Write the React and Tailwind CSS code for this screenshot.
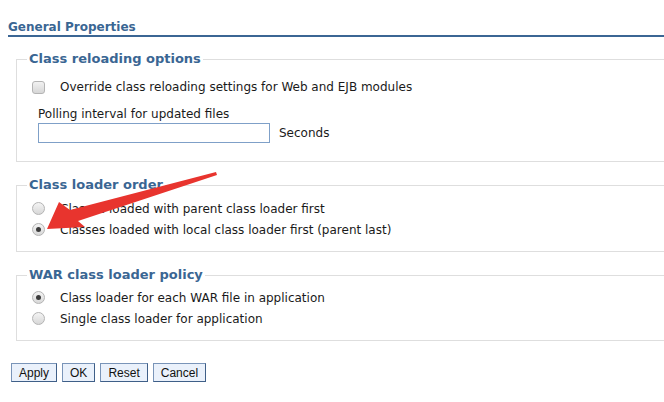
import React from "react";

function Radio({ checked }) {
  return (
    <span className="relative inline-flex items-center justify-center w-[13px] h-[13px] rounded-full border border-[#b4b4b4] bg-gradient-to-b from-[#f4f4f4] to-[#d8d8d8] shrink-0">
      {checked && <span className="w-[5px] h-[5px] rounded-full bg-[#3c3c3c]" />}
    </span>
  );
}

function Option({ checked, label }) {
  return (
    <div className="flex items-center h-[21px] pl-[5px]">
      <Radio checked={checked} />
      <span className="ml-[15px] text-[12px] text-[#1a1a1a]">{label}</span>
    </div>
  );
}

function Group({ title, className, children }) {
  return (
    <fieldset className={"border border-[#dedede] pl-[10px] mr-[-30px] " + className}>
      <legend className="px-[2px] text-[13px] font-bold text-[#3a6693] leading-[18px]">{title}</legend>
      {children}
    </fieldset>
  );
}

export default function App() {
  return (
    <div className="relative w-[664px] h-[402px] overflow-hidden bg-white font-['DejaVu_Sans',sans-serif]">
      <div className="pl-2 pt-[20px]">
        <h2 className="text-[12px] font-bold text-[#3a6693] leading-[15px] border-b-2 border-[#3b6694]">
          General Properties
        </h2>

        <div className="pl-2 pt-[13px]">
          <Group title="Class reloading options" className="pb-[18px]">
            <div className="flex items-center h-[18px] mt-[10px] pl-[5px]">
              <span className="w-[13px] h-[13px] rounded-[3px] border border-[#b4b4b4] bg-gradient-to-b from-[#f2f2f2] to-[#d6d6d6] shrink-0" />
              <span className="ml-[15px] text-[12px] text-[#1a1a1a]">
                Override class reloading settings for Web and EJB modules
              </span>
            </div>
            <div className="pl-[11px] mt-[10px] text-[12px] text-[#1a1a1a] leading-[16px]">
              Polling interval for updated files
            </div>
            <div className="flex items-center pl-[11px] mt-[1px]">
              <div className="w-[232px] h-[20px] border border-[#7fa0c8] bg-white" />
              <span className="ml-[9px] text-[12px] text-[#1a1a1a]">Seconds</span>
            </div>
          </Group>

          <Group title="Class loader order" className="mt-[14px] pb-[11px]">
            <div className="mt-[4px]">
              <Option label="Classes loaded with parent class loader first" />
              <Option checked label="Classes loaded with local class loader first (parent last)" />
            </div>
          </Group>

          <Group title="WAR class loader policy" className="mt-[14px] pb-[11px]">
            <div className="mt-[3px]">
              <Option checked label="Class loader for each WAR file in application" />
              <Option label="Single class loader for application" />
            </div>
          </Group>
        </div>

        <div className="flex gap-[5px] pl-[3px] mt-[22px] font-['Liberation_Sans',Arial,sans-serif]">
          {["Apply", "OK", "Reset", "Cancel"].map((b) => (
            <button
              key={b}
              className="h-[19px] px-[7px] text-[12px] leading-[16px] text-[#111] bg-[#eaf1fb] border border-[#7994b8] border-r-[#3f5f88] border-b-[#3f5f88]"
            >
              {b}
            </button>
          ))}
        </div>
      </div>

      <svg className="absolute left-0 top-0 pointer-events-none" width="664" height="402">
        <polygon
          points="47,229 59,202 70,210 216,172 217,175 78,221 85,227"
          fill="#e8342e"
        />
      </svg>
    </div>
  );
}
